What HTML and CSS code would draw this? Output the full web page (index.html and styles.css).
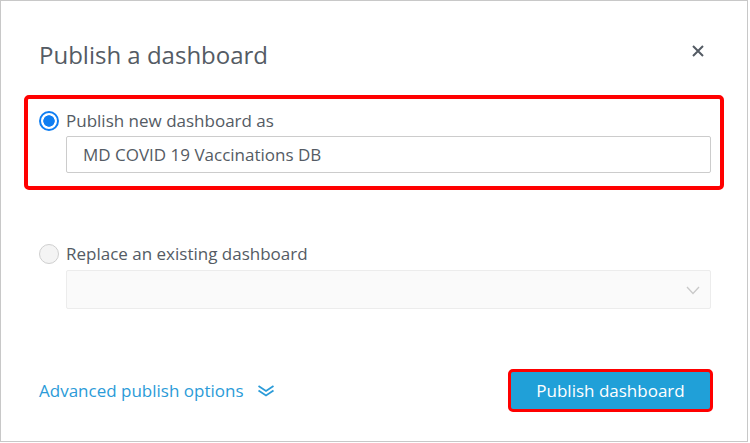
FILE: index.html
```html
<!DOCTYPE html>
<html lang="en">
<head>
<meta charset="utf-8">
<title>Publish a dashboard</title>
<link rel="stylesheet" href="styles.css">
</head>
<body>
<div class="dialog">
  <div class="header">
    <h1 class="title">Publish a dashboard</h1>
    <button class="close" aria-label="Close">
      <svg width="12" height="12" viewBox="0 0 12 12"><path d="M1 1L11 11M11 1L1 11" stroke="#545b64" stroke-width="2" fill="none"/></svg>
    </button>
  </div>

  <div class="option highlighted">
    <label class="row">
      <span class="radio checked"></span>
      <span class="label">Publish new dashboard as</span>
    </label>
    <div class="field">MD COVID 19 Vaccinations DB</div>
  </div>

  <div class="option replace">
    <label class="row">
      <span class="radio"></span>
      <span class="label">Replace an existing dashboard</span>
    </label>
    <div class="select">
      <svg class="chev" width="14" height="9" viewBox="0 0 14 9"><path d="M1 1L7 7.5L13 1" stroke="#c9c9c9" stroke-width="1.3" fill="none"/></svg>
    </div>
  </div>

  <div class="footer">
    <a class="advanced">Advanced publish options
      <svg class="dchev" width="18" height="12" viewBox="0 0 18 12"><path d="M1.5 1L9 6L16.5 1M1.5 5.5L9 10.5L16.5 5.5" stroke="#2b9bd8" stroke-width="1.8" fill="none"/></svg>
    </a>
    <button class="publish">Publish dashboard</button>
  </div>
</div>
</body>
</html>
```

FILE: styles.css
```css
html, body {
  margin: 0;
  padding: 0;
  background: #fff;
}

.dialog {
  width: 748px;
  height: 442px;
  box-sizing: border-box;
  border: 1px solid #c8c8c8;
  background: #fff;
  padding-top: 38px;
  font-family: "Open Sans", "Noto Sans", sans-serif;
  color: #545b64;
  display: flex;
  flex-direction: column;
}

.header {
  display: flex;
  justify-content: space-between;
  align-items: flex-start;
  padding: 0 43px 0 38px;
  height: 32px;
}

.title {
  margin: 0;
  font-size: 24px;
  line-height: 32px;
  font-weight: 400;
  color: #545b64;
}

.close {
  margin-top: 6px;
  padding: 0;
  border: 0;
  background: none;
  width: 12px;
  height: 12px;
  display: flex;
}

.option {
  margin: 0 23px;
  border: 4px solid transparent;
  border-radius: 5px;
  padding: 10px 9px 13px 11px;
  display: flex;
  flex-direction: column;
}

.highlighted {
  margin-top: 24px;
  border-color: #ff0000;
}

.replace {
  margin-top: 38px;
}

.row {
  display: flex;
  align-items: center;
  height: 24px;
}

.radio {
  width: 20px;
  height: 20px;
  box-sizing: border-box;
  border-radius: 50%;
  border: 1px solid #cfcfcf;
  background: #f4f4f4;
  margin-right: 7px;
  flex: none;
}

.radio.checked {
  border: 2.5px solid #0f7ef2;
  background: radial-gradient(circle, #0f7ef2 0 5.4px, #fff 6px);
}

.label {
  font-size: 17px;
  line-height: 24px;
}

.field {
  margin: 3px 0 0 27px;
  height: 37px;
  box-sizing: border-box;
  border: 1px solid #cccccc;
  border-radius: 2px;
  padding: 0 16px;
  font-size: 17px;
  line-height: 35px;
  color: #545b64;
}

.select {
  margin: 4px 0 0 27px;
  height: 39px;
  box-sizing: border-box;
  border: 1px solid #ececec;
  border-radius: 2px;
  background: #fafafa;
  display: flex;
  align-items: center;
  justify-content: flex-end;
  padding-right: 10px;
}

.chev {
  margin-top: 2px;
}

.footer {
  margin-top: 43px;
  padding: 0 34px 0 38px;
  display: flex;
  justify-content: space-between;
  align-items: center;
}

.advanced {
  font-size: 17px;
  line-height: 24px;
  color: #2b9bd8;
  display: flex;
  align-items: center;
  cursor: pointer;
}

.dchev {
  margin-left: 13px;
  margin-top: 1px;
}

.publish {
  height: 43px;
  width: 205px;
  box-sizing: border-box;
  border: 3.5px solid #ff0000;
  border-radius: 5px;
  background: #20a0d8;
  color: #fff;
  font-family: "Open Sans", "Noto Sans", sans-serif;
  font-size: 17px;
  padding: 0;
}
```
